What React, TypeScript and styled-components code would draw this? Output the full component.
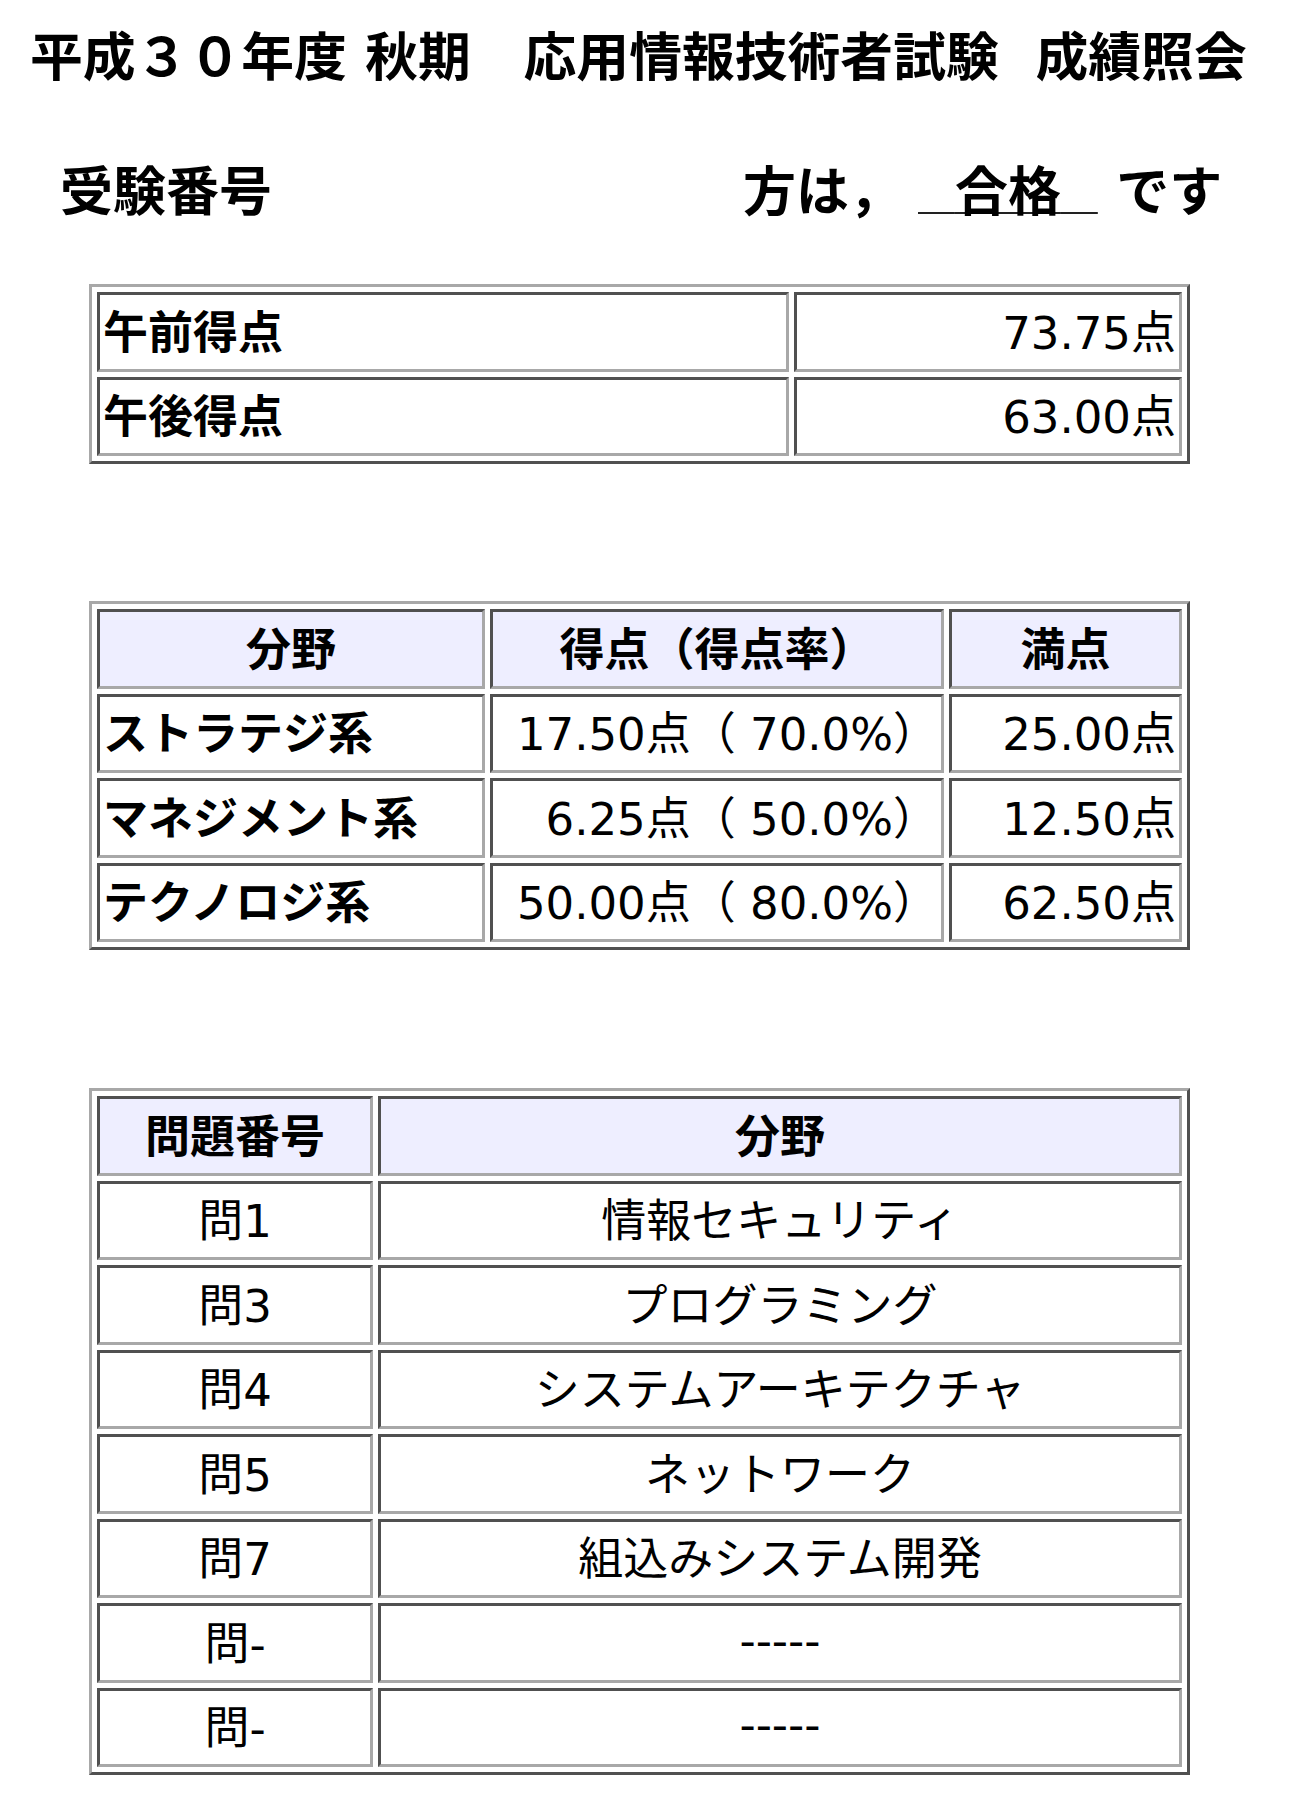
import styled, { createGlobalStyle } from 'styled-components'

const GlobalStyle = createGlobalStyle`
  * { box-sizing: border-box; }
  body {
    margin: 0;
    background: #fff;
    color: #000;
    font-family: "DejaVu Sans", "Noto Sans CJK JP", sans-serif;
  }
`

type Align = 'left' | 'center' | 'right'

const Page = styled.div`
  width: 1300px;
  padding-bottom: 30px;
`

const Title = styled.h1`
  margin: 0;
  padding-left: 30px;
  font-size: 52.8px;
  font-weight: bold;
  line-height: 116px;
  white-space: nowrap;
`

const ResultRow = styled.div`
  display: flex;
  align-items: center;
  height: 144px;
  padding-left: 60px;
  font-size: 53px;
  font-weight: bold;
  white-space: nowrap;
`

const Label = styled.span`
  width: 683px;
`

const Passed = styled.span`
  margin-left: 16px;
  text-decoration: underline;
  text-decoration-color: #222;
  text-decoration-thickness: 2px;
  text-underline-offset: 1px;
`

const Table = styled.table<{ $top: number }>`
  margin: ${p => p.$top}px 0 0 89px;
  width: 1101px;
  table-layout: fixed;
  border-collapse: separate;
  border-spacing: 5px;
  border: 3px solid;
  border-color: #a8a8a8 #505050 #505050 #a8a8a8;
  font-size: 45px;
`

const Cell = styled.td<{ $align?: Align; $bold?: boolean; $w?: number }>`
  height: 79.5px;
  ${p => (p.$w ? `width: ${p.$w}px;` : '')}
  padding: 0 3px 5px;
  border: 3px solid;
  border-color: #505050 #a8a8a8 #a8a8a8 #505050;
  text-align: ${p => p.$align ?? 'left'};
  font-weight: ${p => (p.$bold ? 'bold' : 'normal')};
  vertical-align: middle;
  white-space: nowrap;
  overflow: hidden;
`

const HeadCell = styled.th<{ $w?: number }>`
  height: 79.5px;
  ${p => (p.$w ? `width: ${p.$w}px;` : '')}
  padding: 0 3px 5px;
  border: 3px solid;
  border-color: #505050 #a8a8a8 #a8a8a8 #505050;
  background: #eeeeff;
  text-align: center;
  font-weight: bold;
  vertical-align: middle;
  white-space: nowrap;
`

const fields = [
  ['ストラテジ系', '17.50点（ 70.0%）', '25.00点'],
  ['マネジメント系', '6.25点（ 50.0%）', '12.50点'],
  ['テクノロジ系', '50.00点（ 80.0%）', '62.50点'],
]

const questions = [
  ['問1', '情報セキュリティ'],
  ['問3', 'プログラミング'],
  ['問4', 'システムアーキテクチャ'],
  ['問5', 'ネットワーク'],
  ['問7', '組込みシステム開発'],
  ['問-', '-----'],
  ['問-', '-----'],
]

export default function App() {
  return (
    <Page>
      <GlobalStyle />
      <Title>平成３０年度 秋期　応用情報技術者試験{'\u00a0\u00a0'}成績照会</Title>
      <ResultRow>
        <Label>受験番号</Label>
        <span>
          方は，<Passed>{'\u00a0\u00a0'}合格{'\u00a0\u00a0'}</Passed> です
        </span>
      </ResultRow>

      <Table $top={24}>
        <tbody>
          <tr>
            <Cell $bold $w={692}>午前得点</Cell>
            <Cell $align="right" $w={388}>73.75点</Cell>
          </tr>
          <tr>
            <Cell $bold>午後得点</Cell>
            <Cell $align="right">63.00点</Cell>
          </tr>
        </tbody>
      </Table>

      <Table $top={137}>
        <tbody>
          <tr>
            <HeadCell $w={388}>分野</HeadCell>
            <HeadCell $w={454}>得点（得点率）</HeadCell>
            <HeadCell $w={233}>満点</HeadCell>
          </tr>
          {fields.map(([name, score, full]) => (
            <tr key={name}>
              <Cell $bold>{name}</Cell>
              <Cell $align="right">{score}</Cell>
              <Cell $align="right">{full}</Cell>
            </tr>
          ))}
        </tbody>
      </Table>

      <Table $top={138}>
        <tbody>
          <tr>
            <HeadCell $w={276}>問題番号</HeadCell>
            <HeadCell $w={804}>分野</HeadCell>
          </tr>
          {questions.map(([no, field], i) => (
            <tr key={i}>
              <Cell $align="center">{no}</Cell>
              <Cell $align="center">{field}</Cell>
            </tr>
          ))}
        </tbody>
      </Table>
    </Page>
  )
}
